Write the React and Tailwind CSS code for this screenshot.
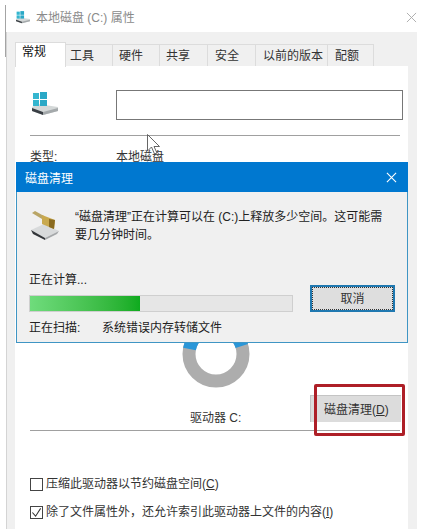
// App.jsx

const tabs = [
  { label: "工具", width: "w-[47px]", pad: "pl-[4px]" },
  { label: "硬件", width: "w-[47px]", pad: "pl-[6px]" },
  { label: "共享", width: "w-[48px]", pad: "pl-[6px]" },
  { label: "安全", width: "w-[48px]", pad: "pl-[7px]" },
  { label: "以前的版本", width: "w-[72px]", pad: "pl-[7px]" },
  { label: "配额", width: "w-[46px]", pad: "pl-[7px]" },
];

const DriveIcon = ({ className }) => (
  <svg viewBox="0 0 30 24" className={className}>
    <path d="M2 15 L8 12 L28 15 L28 19 L13 23 L2 19 Z" fill="#d4d8d8" />
    <path d="M2 16 L13 20 L13 23 L2 19 Z" fill="#3a3f44" />
    <path d="M13 20 L28 16 L28 19 L13 23 Z" fill="#a4a9ab" />
    <rect x="3" y="1" width="6" height="6" fill="#35b6cf" />
    <rect x="10" y="0" width="7" height="7" fill="#2aa8c6" />
    <rect x="3" y="8" width="6" height="6" fill="#35b6cf" />
    <rect x="10" y="8" width="7" height="6" fill="#2aa8c6" />
  </svg>
);

const CleanupIcon = () => (
  <svg viewBox="0 0 30 30" className="w-[30px] h-[30px]">
    <path d="M1 20 L14 14 L29 21 L15 28 Z" fill="#d8dadb" />
    <path d="M1 20 L15 28 L15 30 L3 24 Z" fill="#33363a" />
    <path d="M15 28 L29 21 L27 24 L15 30 Z" fill="#a5a8aa" />
    <path d="M2 3 L5 1 L14 6 L12 9 Z" fill="#b9a566" />
    <path d="M12 5 L25 10 L24 19 L12 14 Z" fill="#c9a94e" />
    <path d="M19 9 L25 10 L24 19 L19 17 Z" fill="#8a6a1f" />
  </svg>
);

const Checkbox = ({ checked }) => (
  <span className="w-[13px] h-[13px] border border-[#444] bg-white flex items-center justify-center shrink-0">
    {checked && (
      <svg viewBox="0 0 12 12" className="w-[11px] h-[11px]">
        <path d="M1.5 6 L5 10 L10.5 1.5" fill="none" stroke="#333" strokeWidth="1.1" />
      </svg>
    )}
  </span>
);

export default function App() {
  return (
    <div
      className="relative w-[424px] h-[529px] overflow-hidden bg-white text-[12px] leading-[16px] text-[#222]"
      style={{ fontFamily: '"Liberation Sans", "Noto Sans CJK SC", sans-serif' }}
    >
      {/* Properties window */}
      <div className="ml-[6px] w-[411px] h-[529px] flex flex-col border-l border-[#d4d4d4]">
        {/* Title bar */}
        <div className="h-[32px] -ml-[7px] w-[424px] shrink-0 bg-white flex items-center pl-[15px] pr-[7px] pt-[3px]">
          <DriveIcon className="w-[16px] h-[13px]" />
          <span className="ml-[5px] text-[#8a8a8a]">本地磁盘 (C:) 属性</span>
          <svg viewBox="0 0 12 12" className="ml-auto w-[11px] h-[11px]">
            <path d="M1 1 L11 11 M11 1 L1 11" stroke="#a8a8a8" strokeWidth="1" />
          </svg>
        </div>

        <div className="flex-1 bg-[#f0f0f0] pl-[8px] pr-[9px] pt-[10px] flex flex-col">
          {/* Tabs */}
          <div className="flex items-end h-[24px] relative z-10">
            <div className="w-[51px] h-[25px] bg-white border border-b-0 border-[#dcdcdc] pl-[6px] pt-[1px] text-[#111] -mb-px">
              常规
            </div>
            {tabs.map((tab) => (
              <div
                key={tab.label}
                className={`${tab.width} ${tab.pad} h-[22px] bg-[#f0f0f0] border border-l-0 border-b-0 border-[#dcdcdc] flex items-center text-[#333]`}
              >
                {tab.label}
              </div>
            ))}
          </div>

          {/* Panel */}
          <div className="flex-1 bg-white pl-[15px] pr-[4px] flex flex-col">
            <div className="flex items-start pt-[24px] h-[69px]">
              <div className="w-[86px] pt-[2px]">
                <DriveIcon className="w-[30px] h-[24px]" />
              </div>
              <div className="w-[287px] h-[30px] shrink-0 border border-[#777] bg-white" />
            </div>
            <div className="w-[370px] border-t border-[#a0a0a0]" />
            <div className="flex mt-[13px] text-[#333]">
              <span className="w-[86px]">类型:</span>
              <span>本地磁盘</span>
            </div>

            {/* Usage ring */}
            <div className="mt-[155px] ml-[152px] w-[68px] h-[68px]">
              <svg viewBox="0 0 68 68" className="w-[68px] h-[68px]">
                <circle cx="34" cy="34" r="27" fill="none" stroke="#adadad" strokeWidth="13" />
                <path d="M7.5 29 A27 27 0 0 1 59.8 26" fill="none" stroke="#2a96d8" strokeWidth="13" />
              </svg>
            </div>

            <div className="flex items-start h-[42px]">
              <span className="w-[280px] pl-[160px] mt-[22px] text-[#333]">驱动器 C:</span>
              <div className="mt-[7px] w-[91px] h-[27px] shrink-0 bg-[#dcdcdc] border-l border-t border-[#c4c4c4] pl-[13px] pt-[6px] text-[#333]">
                磁盘清理(<span className="underline">D</span>)
              </div>
            </div>
            <div className="w-[370px] border-t border-[#a0a0a0]" />

            <div className="flex items-center gap-[3px] mt-[45px] text-[#333]">
              <Checkbox />
              <span>
                压缩此驱动器以节约磁盘空间(<span className="underline">C</span>)
              </span>
            </div>
            <div className="flex items-center gap-[3px] mt-[12px] text-[#333]">
              <Checkbox checked />
              <span>
                除了文件属性外，还允许索引此驱动器上文件的内容(<span className="underline">I</span>)
              </span>
            </div>
          </div>
        </div>
      </div>

      {/* Window edge shadow */}
      <div className="absolute left-[5px] top-[5px] w-[1px] h-[52px] bg-[#a4a4a4]" />

      {/* Mouse cursor */}
      <svg viewBox="0 0 14 22" className="absolute left-[147px] top-[134px] w-[14px] h-[22px]">
        <path d="M0.5 0.5 L0.5 17 L4.5 13 L7.5 20 L10 19 L7 12.5 L12.5 12.5 Z" fill="#fff" stroke="#555" strokeWidth="0.9" />
      </svg>

      {/* Red highlight */}
      <div className="absolute left-[314px] top-[384px] w-[91px] h-[52px] border-[3px] border-[#ae1f27] rounded-[2px]" />

      {/* Disk cleanup dialog */}
      <div className="absolute left-[16px] top-[162px] w-[392px] h-[181px] bg-[#f0f0f0] border border-[#3f95c4] border-t-0 flex flex-col">
        <div className="h-[30px] -mx-px bg-[#0078d0] flex items-center pl-[9px] pr-[11px] pt-[3px] text-white">
          <span>磁盘清理</span>
          <svg viewBox="0 0 12 12" className="ml-auto w-[11px] h-[11px] -mt-[3px]">
            <path d="M1 1 L11 11 M11 1 L1 11" stroke="#fff" strokeWidth="1.2" />
          </svg>
        </div>

        <div className="flex pl-[13px] pt-[16px] h-[80px]">
          <div className="w-[45px] pt-[2px]">
            <CleanupIcon />
          </div>
          <p className="w-[316px] leading-[18px] text-[#222]">
            “磁盘清理”正在计算可以在 (C:)上释放多少空间。这可能需要几分钟时间。
          </p>
        </div>

        <div className="flex pl-[12px] pr-[13px]">
          <div className="w-[264px] shrink-0">
            <div>正在计算...</div>
            <div className="mt-[7px] h-[17px] bg-[#e6e6e6] border border-[#cfcfcf]">
              <div className="w-[42%] h-full bg-gradient-to-r from-[#6fdc7c] to-[#0dab1e]" />
            </div>
          </div>
          <div className="ml-[17px] mt-[13px] w-[85px] h-[27px] shrink-0 bg-[#dedede] border-2 border-[#1f78b0] outline-1 outline-dotted outline-offset-[-3px] outline-[#333] flex items-center justify-center text-[#333]">
            取消
          </div>
        </div>

        <div className="flex pl-[12px] mt-[8px]">
          <span className="w-[73px]">正在扫描:</span>
          <span>系统错误内存转储文件</span>
        </div>
      </div>
    </div>
  );
}
